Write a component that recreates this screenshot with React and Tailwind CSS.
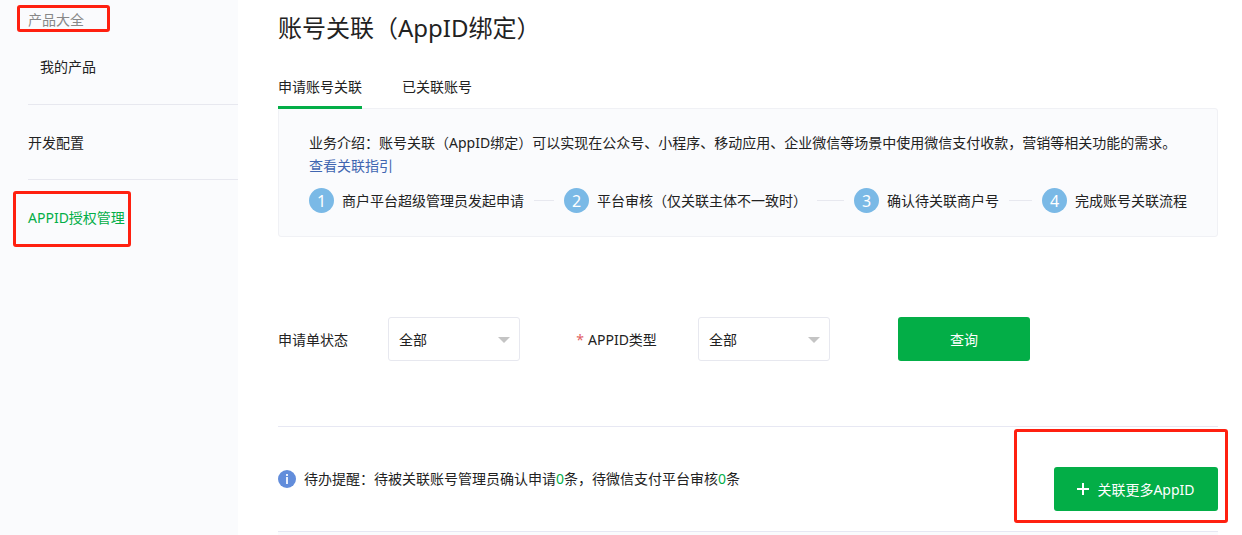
import { useState } from 'react';

const steps = [
  { text: '商户平台超级管理员发起申请', line: 'w-5' },
  { text: '平台审核（仅关联主体不一致时）', line: 'w-[27px]' },
  { text: '确认待关联商户号', line: 'w-[23px]' },
  { text: '完成账号关联流程' },
];

const tabs = [
  { id: 'apply', label: '申请账号关联' },
  { id: 'linked', label: '已关联账号' },
];

const Highlight = ({ className }) => (
  <span className={`pointer-events-none absolute rounded-[3px] border-3 border-[#ff2010] ${className}`} />
);

const SelectField = ({ id, label, required }) => (
  <div className="flex items-center">
    <label htmlFor={id} className="relative w-[110px]">
      {required && <span className="absolute right-full mr-1 text-[#e15f63]">*</span>}
      {label}
    </label>
    <div className="relative">
      <select id={id} className="h-11 w-[132px] appearance-none rounded-[3px] border border-[#e7e8ef] bg-white px-2.5 outline-none">
        <option>全部</option>
      </select>
      <svg className="pointer-events-none absolute top-5 right-2.5 h-1.5 w-3" viewBox="0 0 12 6">
        <path d="M0 0h12L6 6z" fill="#c4c4c4" />
      </svg>
    </div>
  </div>
);

const Sidebar = () => (
  <nav className="w-[238px] shrink-0 bg-[#fafbfd] pl-7">
    <div className="relative flex h-[38px] items-center text-[#888]">
      <a href="#products">产品大全</a>
      <Highlight className="top-[5px] -left-[11px] h-[27px] w-[93px]" />
    </div>
    <div className="flex h-[66px] items-start pt-[17px] pl-3">
      <a href="#mine">我的产品</a>
    </div>
    <div className="flex h-[75px] items-center border-t border-[#e7e8ef]">
      <a href="#config">开发配置</a>
    </div>
    <div className="relative flex h-[76px] items-center border-t border-[#e7e8ef]">
      <a href="#appid" className="text-[#03ae47]">APPID授权管理</a>
      <Highlight className="top-[11px] -left-[15px] h-14 w-[118px]" />
    </div>
  </nav>
);

const App = () => {
  const [tab, setTab] = useState('apply');

  return (
    <div className="flex min-h-screen bg-white font-['Noto_Sans','Noto_Sans_CJK_SC',sans-serif] text-[14px] leading-[23px] text-[#222]">
      <Sidebar />

      <main className="flex min-w-0 flex-1 flex-col pt-3 pr-6 pl-10">
        <h1 className="text-2xl leading-8">账号关联（AppID绑定）</h1>

        {/* Tabs */}
        <div className="relative z-10 mt-7 -mb-px flex gap-10">
          {tabs.map(({ id, label }) => (
            <button
              key={id}
              type="button"
              onClick={() => setTab(id)}
              className={`border-b-3 pb-1 leading-[30px] ${tab === id ? 'border-[#03ae47]' : 'border-transparent'}`}
            >
              {label}
            </button>
          ))}
        </div>

        {/* Intro */}
        <section className="rounded-[3px] border border-[#f0f1f5] bg-[#fafbfd] px-[30px] pt-[22px] pb-[23px]">
          <p>业务介绍：账号关联（AppID绑定）可以实现在公众号、小程序、移动应用、企业微信等场景中使用微信支付收款，营销等相关功能的需求。</p>
          <a href="#guide" className="block text-[#4066b1]">查看关联指引</a>
          <ol className="mt-[11px] flex">
            {steps.map(({ text, line }, i) => (
              <li key={text} className="flex items-center whitespace-nowrap">
                <span className="mr-2 flex size-[25px] items-center justify-center rounded-full bg-[#7ab9e6] text-base text-white">{i + 1}</span>
                {text}
                {line && <span className={`mx-2.5 h-px bg-[#e7e8ef] ${line}`} />}
              </li>
            ))}
          </ol>
        </section>

        {/* Filters */}
        <form className="mt-20 flex gap-[68px]" onSubmit={(e) => e.preventDefault()}>
          <SelectField id="status" label="申请单状态" />
          <SelectField id="type" label="APPID类型" required />
          <button type="submit" className="h-11 w-[132px] rounded-[3px] bg-[#03ae47] text-white">查询</button>
        </form>

        {/* Todo reminder */}
        <div className="mt-[65px] flex items-start justify-between border-y border-[#e7e8f3] pt-10 pb-5">
          <div className="flex items-center gap-2 leading-6">
            <svg className="size-[18px]" viewBox="0 0 18 18">
              <circle cx="9" cy="9" r="9" fill="#628ddb" />
              <path d="M8 4h2v2H8zM8 7h2v7H8z" fill="#e8effc" />
            </svg>
            <p>
              待办提醒：待被关联账号管理员确认申请<span className="text-[#03ae47]">0</span>条，待微信支付平台审核<span className="text-[#03ae47]">0</span>条
            </p>
          </div>
          <div className="relative">
            <button type="button" className="flex h-11 w-[164px] items-center justify-center gap-2 rounded-[3px] bg-[#03ae47] text-white">
              <svg className="size-3" viewBox="0 0 12 12">
                <path d="M5 0h2v5h5v2H7v5H5V7H0V5h5z" fill="#fff" />
              </svg>
              关联更多AppID
            </button>
            <Highlight className="-top-[38px] -left-10 h-[94px] w-[214px]" />
          </div>
        </div>
        <div className="flex-1 bg-[#fafbfd]" />
      </main>
    </div>
  );
};

export default App;
